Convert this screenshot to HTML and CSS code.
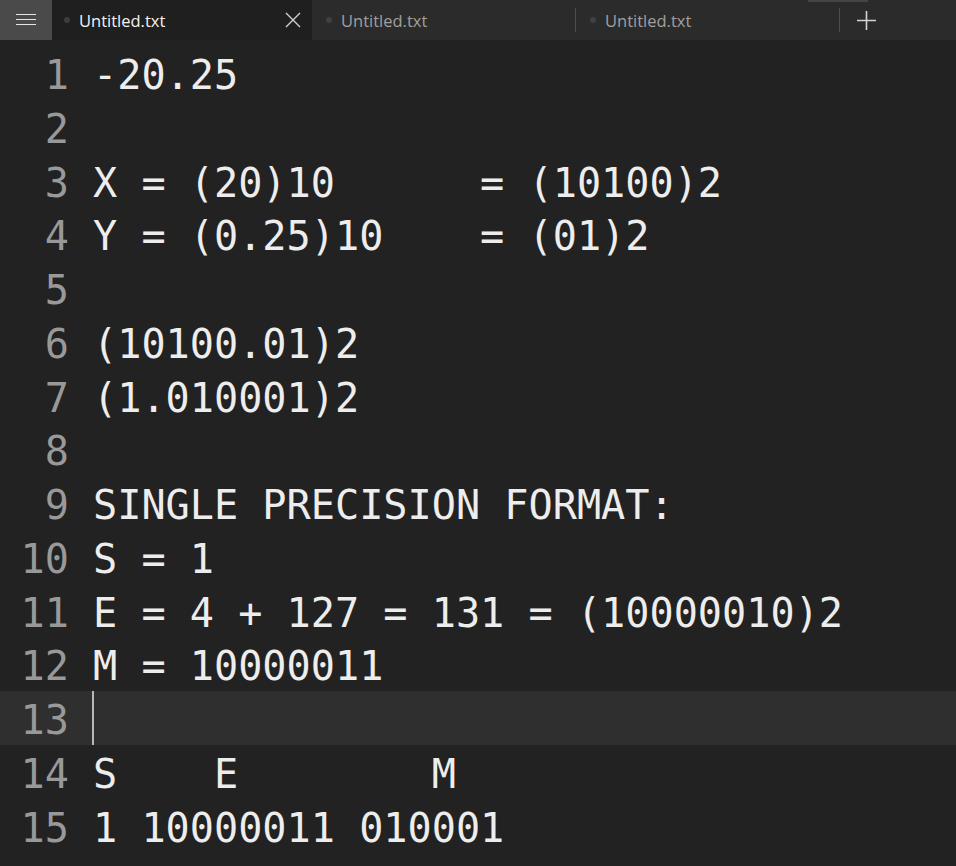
FILE: index.html
```html
<!DOCTYPE html>
<html>
<head>
<meta charset="utf-8">
<link rel="stylesheet" href="styles.css">
</head>
<body>
<div class="window">
  <div class="tabbar">
    <div class="menu">
      <svg width="20" height="12" viewBox="0 0 20 12"><path d="M0 0.5H20M0 5.5H20M0 10.5H20" stroke="#e6e6e6" stroke-width="1"/></svg>
    </div>
    <div class="tab active">
      <span class="dot"></span>
      <span class="title">Untitled.txt</span>
      <svg class="close" width="16" height="16" viewBox="0 0 16 16"><path d="M1 1L15 15M15 1L1 15" stroke="#d0d0d0" stroke-width="1.4"/></svg>
    </div>
    <div class="tab">
      <span class="dot"></span>
      <span class="title">Untitled.txt</span>
    </div>
    <div class="sep"></div>
    <div class="tab">
      <span class="dot"></span>
      <span class="title">Untitled.txt</span>
    </div>
    <div class="sep"></div>
    <div class="add">
      <svg width="19" height="19" viewBox="0 0 19 19"><path d="M9.5 0V19M0 9.5H19" stroke="#d4d4d4" stroke-width="1.6"/></svg>
    </div>
    <div class="scroll-hint"></div>
  </div>
  <div class="editor">
    <div class="line"><span class="num">1</span><span class="code">-20.25</span></div>
    <div class="line"><span class="num">2</span><span class="code"></span></div>
    <div class="line"><span class="num">3</span><span class="code">X = (20)10      = (10100)2</span></div>
    <div class="line"><span class="num">4</span><span class="code">Y = (0.25)10    = (01)2</span></div>
    <div class="line"><span class="num">5</span><span class="code"></span></div>
    <div class="line"><span class="num">6</span><span class="code">(10100.01)2</span></div>
    <div class="line"><span class="num">7</span><span class="code">(1.010001)2</span></div>
    <div class="line"><span class="num">8</span><span class="code"></span></div>
    <div class="line"><span class="num">9</span><span class="code">SINGLE PRECISION FORMAT:</span></div>
    <div class="line"><span class="num">10</span><span class="code">S = 1</span></div>
    <div class="line"><span class="num">11</span><span class="code">E = 4 + 127 = 131 = (10000010)2</span></div>
    <div class="line"><span class="num">12</span><span class="code">M = 10000011</span></div>
    <div class="line current"><span class="num">13</span><span class="code"><span class="caret"></span></span></div>
    <div class="line"><span class="num">14</span><span class="code">S    E        M</span></div>
    <div class="line"><span class="num">15</span><span class="code">1 10000011 010001</span></div>
  </div>
</div>
</body>
</html>
```
FILE: styles.css
```css
html, body {
  margin: 0;
  padding: 0;
  background: #222222;
}

.window {
  width: 956px;
  height: 866px;
  overflow: hidden;
  background: #222222;
}

.tabbar {
  position: relative;
  display: flex;
  align-items: center;
  height: 40px;
  background: #2b2b2b;
  font-family: "Open Sans", "Noto Sans", sans-serif;
  font-size: 16.5px;
}

.menu {
  width: 52px;
  height: 40px;
  background: #4a4a4a;
  display: flex;
  align-items: center;
  justify-content: center;
  flex: none;
}

.tab {
  height: 40px;
  width: 263px;
  display: flex;
  align-items: center;
  color: #a0a0a0;
  box-sizing: border-box;
  padding-left: 14px;
  flex: none;
}

.tab.active {
  width: 260px;
  background: #1f1f1f;
  color: #f2f2f2;
  padding-left: 12px;
}

.dot {
  width: 6px;
  height: 6px;
  border-radius: 50%;
  background: #404040;
  margin-right: 9px;
  flex: none;
}

.tab.active .dot {
  background: #3c3c3c;
}

.title {
  flex: 1;
  line-height: 40px;
  padding-top: 2px;
}

.close {
  margin-right: 11px;
}

.sep {
  width: 1px;
  height: 24px;
  background: #4e4e4e;
  flex: none;
}

.add {
  width: 52px;
  height: 40px;
  display: flex;
  align-items: center;
  justify-content: center;
  flex: none;
}

.scroll-hint {
  position: absolute;
  left: 808px;
  top: 0;
  width: 60px;
  height: 2px;
  background: #454545;
}

.editor {
  padding-top: 6px;
  font-family: "DejaVu Sans Mono", "Liberation Mono", monospace;
  font-size: 40.2px;
}

.line {
  display: flex;
  height: 53.75px;
  box-sizing: border-box;
  padding-top: 5px;
  line-height: 48.75px;
  white-space: pre;
}

.line.current {
  background: #2f2f2f;
}

.num {
  width: 69px;
  flex: none;
  text-align: right;
  color: #999999;
}

.code {
  padding-left: 24px;
  color: #ededed;
  position: relative;
}

.caret {
  position: absolute;
  left: 23px;
  top: -5px;
  width: 2px;
  height: 53.75px;
  background: #b8b8b8;
}
```
